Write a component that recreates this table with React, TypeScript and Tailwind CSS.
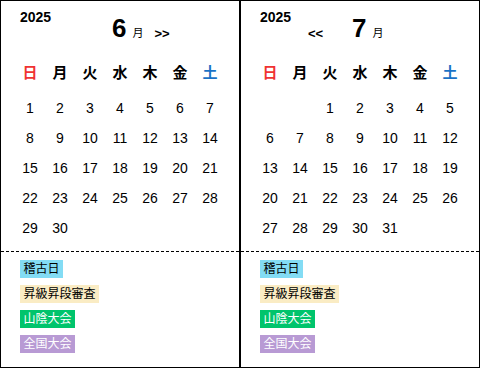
import React from 'react';

type Month = {
  year: number;
  month: number;
  startDay: number; // 0 = Sunday
  days: number;
  prev?: boolean;
  next?: boolean;
};

const WEEKDAYS = ['日', '月', '火', '水', '木', '金', '土'];

const LEGEND = [
  { label: '稽古日', cls: 'bg-[#83dcf4] text-black' },
  { label: '昇級昇段審査', cls: 'bg-[#faecc4] text-black' },
  { label: '山陰大会', cls: 'bg-[#00c46c] text-white' },
  { label: '全国大会', cls: 'bg-[#b89ad4] text-white' },
];

const MONTHS: Month[] = [
  { year: 2025, month: 6, startDay: 0, days: 30, next: true },
  { year: 2025, month: 7, startDay: 2, days: 31, prev: true },
];

const weekdayColor = (i: number) =>
  i === 0 ? 'text-[#f03232]' : i === 6 ? 'text-[#1a72c6]' : 'text-black';

const CalendarPanel: React.FC<{ data: Month }> = ({ data }) => {
  // Build cells: blanks before the 1st, then the days
  const cells: (number | null)[] = [];
  for (let i = 0; i < data.startDay; i++) cells.push(null);
  for (let d = 1; d <= data.days; d++) cells.push(d);

  return (
    <div className="w-[240px] h-[368px] border border-black flex flex-col">
      <div className="h-[250px]">
        {/* Header */}
        <div className="flex items-start pl-[19px]">
          <div className="w-[48px] mt-[8px] text-[14px] leading-[16px] font-bold">{data.year}</div>
          <div className="flex items-baseline mt-[14px]">
            <div className="w-[44px] text-[13px] font-bold leading-[26px] relative top-[1px]">
              {data.prev ? '<<' : ''}
            </div>
            <span className="text-[26px] leading-[26px] font-bold">{data.month}</span>
            <span className="ml-[6px] text-[11px] leading-[26px]">月</span>
            {data.next && (
              <span className="ml-[11px] text-[13px] leading-[26px] font-bold relative top-[1px]">
                &gt;&gt;
              </span>
            )}
          </div>
        </div>

        {/* Weekday header */}
        <div className="grid grid-cols-7 w-[210px] ml-[14px] mt-[12px]">
          {WEEKDAYS.map((w, i) => (
            <div
              key={w}
              className={`h-[30px] flex items-center justify-center text-[15px] font-bold ${weekdayColor(i)}`}
            >
              {w}
            </div>
          ))}
        </div>

        {/* Days */}
        <div className="grid grid-cols-7 w-[210px] ml-[14px] mt-[5px]">
          {cells.map((d, i) => (
            <div key={i} className="h-[30px] text-center text-[14px] leading-[30px] text-black">
              {d ?? ''}
            </div>
          ))}
        </div>
      </div>

      {/* Dashed divider */}
      <div className="h-[1px] bg-[repeating-linear-gradient(to_right,#000_0_3px,transparent_3px_5px)]" />

      {/* Legend */}
      <div className="flex flex-col items-start gap-[7px] pl-[19px] pt-[8px]">
        {LEGEND.map((l) => (
          <span key={l.label} className={`px-[3.5px] text-[12px] leading-[18px] ${l.cls}`}>
            {l.label}
          </span>
        ))}
      </div>
    </div>
  );
};

export default function App() {
  return (
    <div
      className="flex w-[480px] h-[368px] bg-white text-black"
      style={{ fontFamily: '"Liberation Sans", "Noto Sans CJK JP", sans-serif' }}
    >
      {MONTHS.map((m) => (
        <CalendarPanel key={m.month} data={m} />
      ))}
    </div>
  );
}
